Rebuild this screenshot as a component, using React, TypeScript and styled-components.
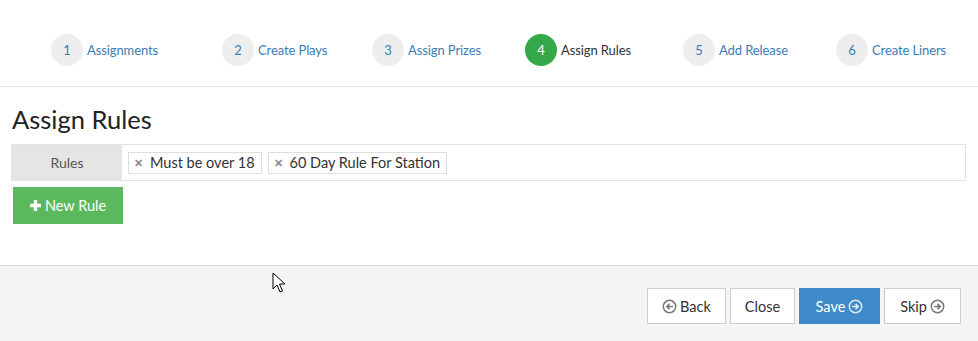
import React from "react";
import styled, { createGlobalStyle } from "styled-components";

const Global = createGlobalStyle`
  html, body { margin: 0; padding: 0; background: #ffffff; }
  body { font-family: Lato, "Open Sans", sans-serif; color: #333; }
  * { box-sizing: border-box; }
`;

const Page = styled.div`
  position: relative;
  width: 978px;
  height: 341px;
  display: flex;
  flex-direction: column;
  overflow: hidden;
`;

const StepsBar = styled.div`
  display: grid;
  grid-template-columns: 171px 150px 153px 158px 153px auto;
  padding: 34px 0 20px 51px;
  border-bottom: 1px solid #e8e8e8;
`;

const Step = styled.div`
  display: flex;
  align-items: center;
  gap: 4px;
`;

const Circle = styled.span<{ $active?: boolean }>`
  width: 32px;
  height: 32px;
  border-radius: 50%;
  display: flex;
  align-items: center;
  justify-content: center;
  font-size: 13px;
  background: ${(p) => (p.$active ? "#35a84a" : "#eeeeee")};
  color: ${(p) => (p.$active ? "#ffffff" : "#3b7db4")};
`;

const StepLabel = styled.span<{ $active?: boolean }>`
  font-size: 13px;
  letter-spacing: -0.1px;
  color: ${(p) => (p.$active ? "#333333" : "#3b7db4")};
`;

const Body = styled.div`
  padding: 0 12px 0 11px;
  flex: 1;
`;

const Title = styled.h1`
  margin: 17px 0 0 1px;
  font-size: 25.5px;
  font-weight: 400;
  line-height: 30px;
  color: #222;
`;

const FormRow = styled.div`
  margin-top: 10px;
  display: flex;
  border: 1px solid #e3e3e3;
  height: 37px;
`;

const RowLabel = styled.div`
  width: 110px;
  background: #e5e5e5;
  display: flex;
  align-items: center;
  justify-content: center;
  font-size: 14px;
  color: #555;
`;

const Tags = styled.div`
  flex: 1;
  display: flex;
  align-items: center;
  gap: 6px;
  padding-left: 6px;
`;

const Tag = styled.span`
  display: flex;
  align-items: center;
  height: 22px;
  border: 1px solid #dedede;
  background: #fff;
  padding: 0 6px 0 5px;
  font-size: 14.5px;
  color: #333;
  gap: 7px;
`;

const TagX = styled.span`
  font-size: 11px;
  color: #8a8a8a;
  font-weight: 900;
  line-height: 1;
`;

const GreenButton = styled.button`
  margin: 6px 0 0 2px;
  width: 110px;
  height: 37px;
  border: none;
  background: #5cb85c;
  color: #fff;
  font-family: inherit;
  font-size: 14.5px;
  display: flex;
  align-items: center;
  justify-content: center;
  gap: 4px;
  padding: 0;
`;

const Footer = styled.div`
  height: 76px;
  background: #f4f4f4;
  border-top: 1px solid #dddddd;
  display: flex;
  justify-content: flex-end;
  align-items: flex-start;
  gap: 4px;
  padding: 22px 17px 0 0;
`;

const Btn = styled.button<{ $primary?: boolean; $w: number }>`
  width: ${(p) => p.$w}px;
  height: 36px;
  border: 1px solid ${(p) => (p.$primary ? "#3f8ac9" : "#cccccc")};
  background: ${(p) => (p.$primary ? "#3f8ac9" : "#ffffff")};
  color: ${(p) => (p.$primary ? "#ffffff" : "#333333")};
  font-family: inherit;
  font-size: 14.5px;
  display: flex;
  align-items: center;
  justify-content: center;
  gap: 3px;
  padding: 0;
`;

const Cursor = styled.svg`
  position: absolute;
  left: 272px;
  top: 272px;
`;

const CircleArrow = ({ dir, color }: { dir: "left" | "right"; color: string }) => (
  <svg width="15" height="15" viewBox="0 0 16 16">
    <circle cx="8" cy="8" r="6.6" fill="none" stroke={color} strokeWidth="1.6" />
    {dir === "right" ? (
      <path d="M4.3 8h6.2M8 5.2L10.8 8 8 10.8" fill="none" stroke={color} strokeWidth="1.7" />
    ) : (
      <path d="M11.7 8H5.5M8 5.2L5.2 8 8 10.8" fill="none" stroke={color} strokeWidth="1.7" />
    )}
  </svg>
);

const Plus = () => (
  <svg width="11" height="11" viewBox="0 0 11 11">
    <path d="M3.8 0h3.4v3.8H11v3.4H7.2V11H3.8V7.2H0V3.8h3.8z" fill="#fff" />
  </svg>
);

const steps = [
  "Assignments",
  "Create Plays",
  "Assign Prizes",
  "Assign Rules",
  "Add Release",
  "Create Liners",
];

export default function App() {
  return (
    <Page>
      <Global />
      <StepsBar>
        {steps.map((s, i) => (
          <Step key={s}>
            <Circle $active={i === 3}>{i + 1}</Circle>
            <StepLabel $active={i === 3}>{s}</StepLabel>
          </Step>
        ))}
      </StepsBar>
      <Body>
        <Title>Assign Rules</Title>
        <FormRow>
          <RowLabel>Rules</RowLabel>
          <Tags>
            <Tag>
              <TagX>✕</TagX>Must be over 18
            </Tag>
            <Tag>
              <TagX>✕</TagX>60 Day Rule For Station
            </Tag>
          </Tags>
        </FormRow>
        <GreenButton>
          <Plus />
          New Rule
        </GreenButton>
      </Body>
      <Footer>
        <Btn $w={79}>
          <CircleArrow dir="left" color="#777" />
          Back
        </Btn>
        <Btn $w={65}>Close</Btn>
        <Btn $w={81} $primary>
          Save
          <CircleArrow dir="right" color="#dce9f5" />
        </Btn>
        <Btn $w={77}>
          Skip
          <CircleArrow dir="right" color="#777" />
        </Btn>
      </Footer>
      <Cursor width="14" height="21" viewBox="0 0 14 21">
        <path d="M1 1v16l4-4 3 7 2.5-1-3-7h5.5z" fill="#fff" stroke="#000" strokeWidth="1" strokeLinejoin="round" />
      </Cursor>
    </Page>
  );
}
